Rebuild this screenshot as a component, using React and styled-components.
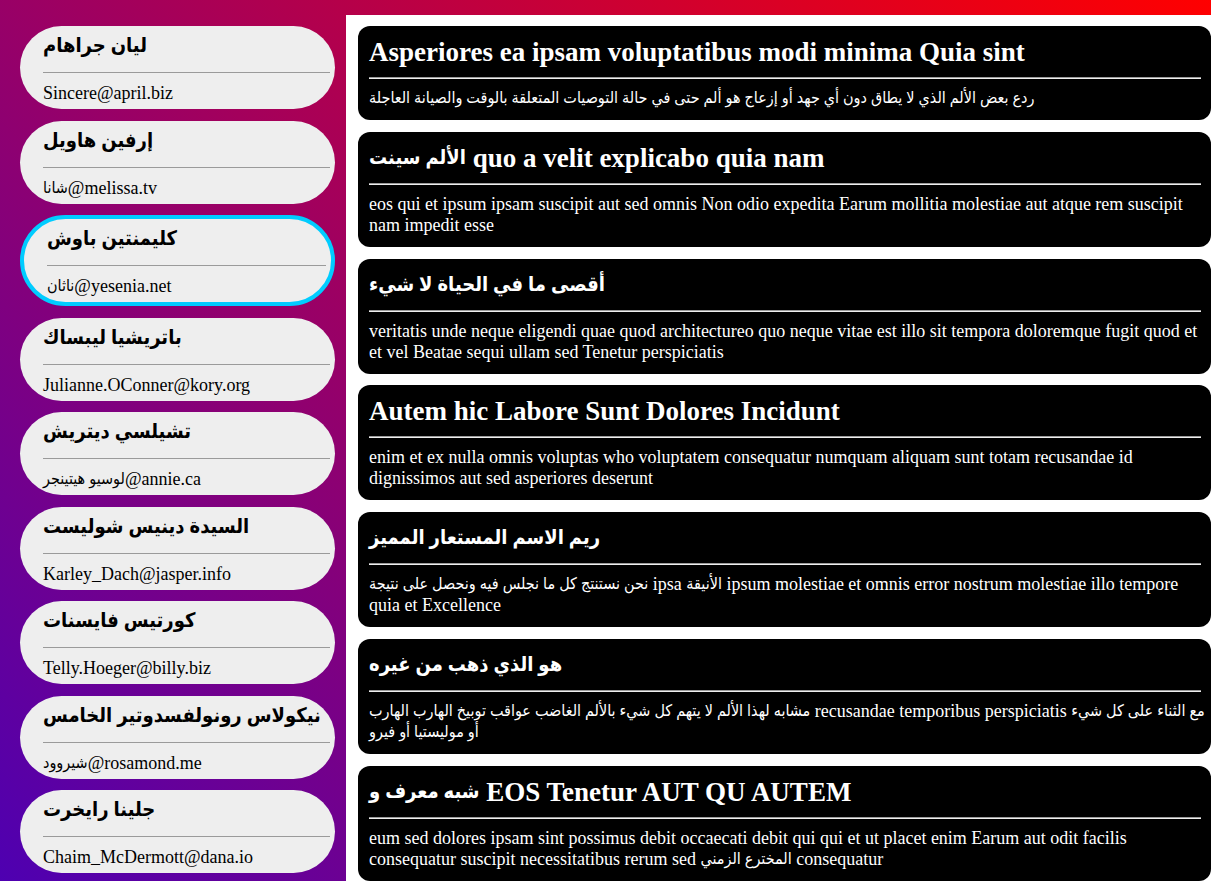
import React, { useState } from "react";
import styled, { createGlobalStyle } from "styled-components";

const GlobalStyle = createGlobalStyle`
  * { box-sizing: border-box; }
  body {
    margin: 0;
    font-family: "Liberation Serif", "Times New Roman", serif;
    font-size: 18px;
    line-height: 21px;
    color: #000;
  }
`;

const Page = styled.div`
  display: flex;
  flex-direction: column;
  min-height: 100vh;
  padding-top: 15px;
  background: linear-gradient(45deg, #4e00b1, #f00);
`;

const Columns = styled.div`
  flex: 1;
  display: grid;
  grid-template-columns: minmax(0, 2fr) minmax(0, 5fr);
`;

const UserList = styled.ul`
  display: flex;
  flex-direction: column;
  justify-content: space-between;
  gap: 11px;
  margin: 0;
  padding: 11px 11px 8px 20px;
  list-style: none;
`;

const UserCard = styled.button`
  display: flex;
  flex-direction: column;
  width: 100%;
  padding: 5px 5px 5px 23px;
  border: ${(p) => (p.$selected ? "4px solid #00ccff" : "0")};
  border-radius: 50px;
  background: #eee;
  color: #000;
  font: inherit;
  text-align: left;
  cursor: pointer;
`;

const UserName = styled.span`
  font-size: 27px;
  font-weight: bold;
  line-height: 30px;
  white-space: nowrap;
`;

const UserRule = styled.span`
  align-self: stretch;
  margin: 11px 0 9px;
  border-top: 1px solid #9a9a9a;
  border-bottom: 1px solid #eee;
`;

const PostList = styled.main`
  display: flex;
  flex-direction: column;
  justify-content: space-between;
  gap: 11px;
  padding: 11px 0 0 12px;
  background: #fff;
`;

const PostCard = styled.article`
  padding: 11px 4px 11px 11px;
  border-radius: 12px;
  background: #000;
  color: #fff;
`;

const PostTitle = styled.h2`
  margin: 0;
  font-size: 27px;
  line-height: 30px;
`;

const PostRule = styled.hr`
  margin: 10px 6px 9px 0;
  border: 0;
  border-top: 1px solid #9a9a9a;
  border-bottom: 1px solid #eee;
`;

const PostBody = styled.p`
  margin: 0;
`;

const Arabic = styled.span`
  font-family: "Liberation Serif", "DejaVu Sans Condensed", "DejaVu Sans", serif;
  font-size: ${(p) => (p.$large ? 20 : 16)}px;
  line-height: 1;
  vertical-align: ${(p) => (p.$large ? 3 : 1)}px;
`;

const arabicRun = /([\u0600-\u06ff]+(?: [\u0600-\u06ff]+)*)/;

function MixedText({ children, large }) {
  return children.split(arabicRun).map((part, i) =>
    i % 2 ? (
      <Arabic key={i} $large={large} lang="ar">
        {part}
      </Arabic>
    ) : (
      part
    )
  );
}

const users = [
  { name: "ليان جراهام", email: "Sincere@april.biz" },
  { name: "إرفين هاويل", email: "شانا@melissa.tv" },
  { name: "كليمنتين باوش", email: "ناثان@yesenia.net" },
  { name: "باتريشيا ليبساك", email: "Julianne.OConner@kory.org" },
  { name: "تشيلسي ديتريش", email: "لوسيو هيتينجر@annie.ca" },
  { name: "السيدة دينيس شوليست", email: "Karley_Dach@jasper.info" },
  { name: "كورتيس فايسنات", email: "Telly.Hoeger@billy.biz" },
  { name: "نيكولاس رونولفسدوتير الخامس", email: "شيروود@rosamond.me" },
  { name: "جلينا رايخرت", email: "Chaim_McDermott@dana.io" },
];

const posts = [
  {
    title: "Asperiores ea ipsam voluptatibus modi minima Quia sint",
    body: "ردع بعض الألم الذي لا يطاق دون أي جهد أو إزعاج هو ألم حتى في حالة التوصيات المتعلقة بالوقت والصيانة العاجلة",
  },
  {
    title: "الألم سينت quo a velit explicabo quia nam",
    body: "eos qui et ipsum ipsam suscipit aut sed omnis Non odio expedita Earum mollitia molestiae aut atque rem suscipit nam impedit esse",
  },
  {
    title: "أقصى ما في الحياة لا شيء",
    body: "veritatis unde neque eligendi quae quod architectureo quo neque vitae est illo sit tempora doloremque fugit quod et et vel Beatae sequi ullam sed Tenetur perspiciatis",
  },
  {
    title: "Autem hic Labore Sunt Dolores Incidunt",
    body: "enim et ex nulla omnis voluptas who voluptatem consequatur numquam aliquam sunt totam recusandae id dignissimos aut sed asperiores deserunt",
  },
  {
    title: "ريم الاسم المستعار المميز",
    body: "نحن نستنتج كل ما نجلس فيه ونحصل على نتيجة ipsa الأنيقة ipsum molestiae et omnis error nostrum molestiae illo tempore quia et Excellence",
  },
  {
    title: "هو الذي ذهب من غيره",
    body: "مشابه لهذا الألم لا يتهم كل شيء بالألم الغاضب عواقب توبيخ الهارب الهارب recusandae temporibus perspiciatis مع الثناء على كل شيء أو موليستيا أو فيرو",
  },
  {
    title: "شبه معرف و EOS Tenetur AUT QU AUTEM",
    body: "eum sed dolores ipsam sint possimus debit occaecati debit qui qui et ut placet enim Earum aut odit facilis consequatur suscipit necessitatibus rerum sed المخترع الزمني consequatur",
  },
];

export default function App() {
  const [selected, setSelected] = useState(2);
  return (
    <Page>
      <GlobalStyle />
      <Columns>
        <UserList>
          {users.map((user, i) => (
            <li key={user.email}>
              <UserCard
                type="button"
                $selected={i === selected}
                aria-pressed={i === selected}
                onClick={() => setSelected(i)}
              >
                <UserName>
                  <MixedText large>{user.name}</MixedText>
                </UserName>
                <UserRule />
                <span>
                  <MixedText>{user.email}</MixedText>
                </span>
              </UserCard>
            </li>
          ))}
        </UserList>
        <PostList>
          {posts.map((post) => (
            <PostCard key={post.title}>
              <PostTitle>
                <MixedText large>{post.title}</MixedText>
              </PostTitle>
              <PostRule />
              <PostBody>
                <MixedText>{post.body}</MixedText>
              </PostBody>
            </PostCard>
          ))}
        </PostList>
      </Columns>
    </Page>
  );
}
